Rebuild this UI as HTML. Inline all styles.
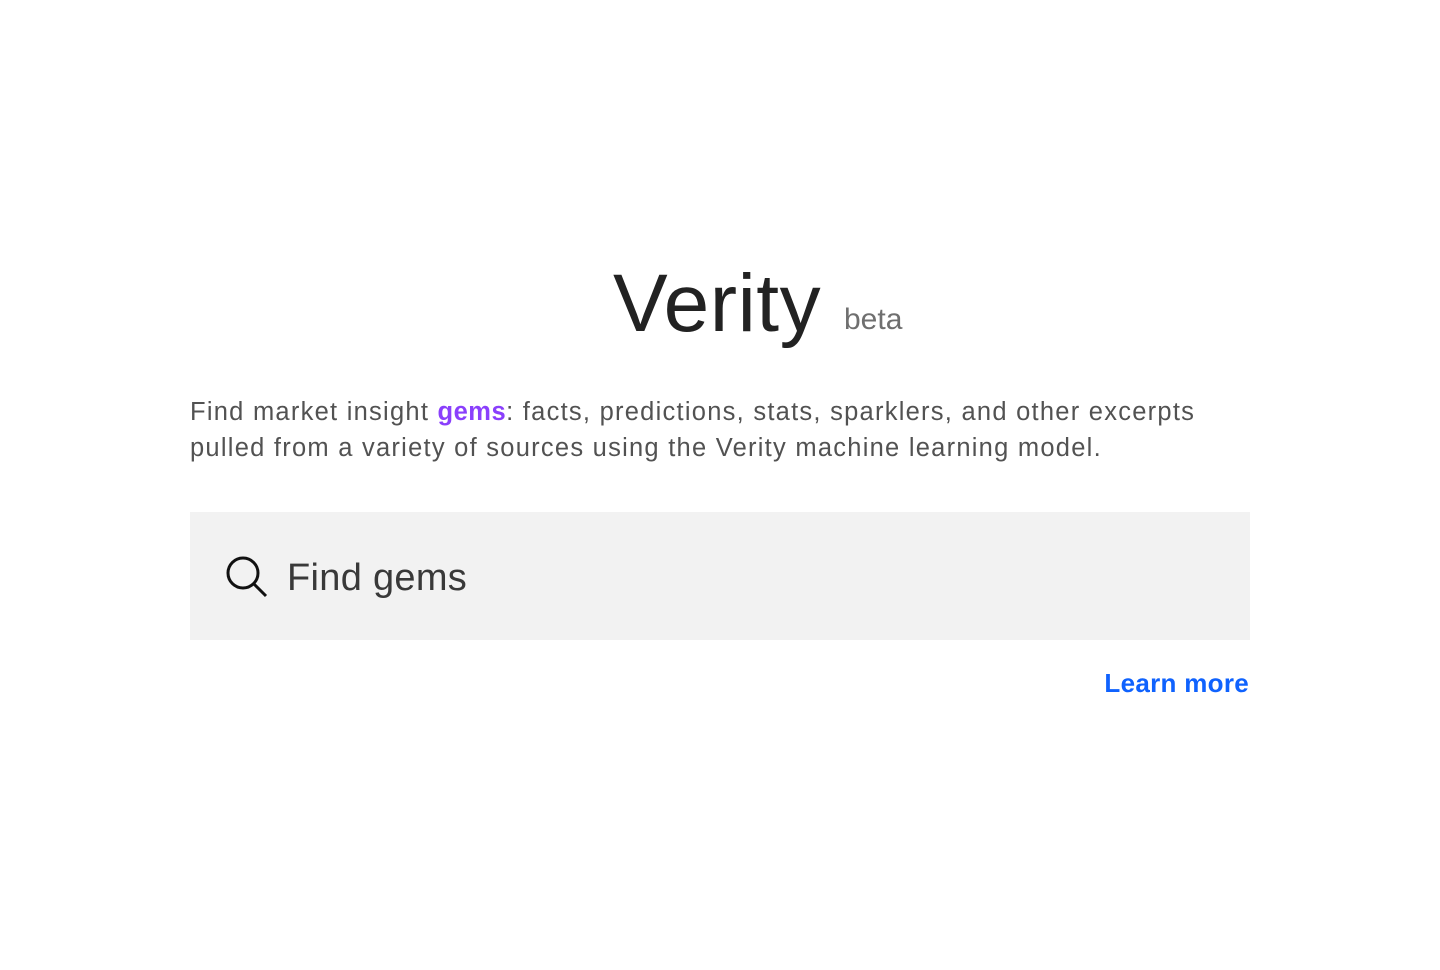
<!DOCTYPE html>
<html><head><style>
body{margin:0;background:#fff;font-family:"Liberation Sans",sans-serif;width:1440px;height:970px;position:relative;overflow:hidden}
.t{position:absolute;left:613px;top:263px;font-size:82px;color:#222;line-height:1;white-space:nowrap;letter-spacing:0.5px}
.b{position:absolute;left:844px;top:305px;font-size:30px;color:#6f6f6f;line-height:1}
.p{position:absolute;left:190px;top:394px;width:1060px;font-size:25.5px;line-height:36px;color:#525252;white-space:nowrap;letter-spacing:1.25px}
.p b{color:#8a3ffc;letter-spacing:0.5px}
.s{position:absolute;left:190px;top:512px;width:1060px;height:128px;background:#f2f2f2}
.f{position:absolute;left:287px;top:556px;font-size:38px;color:#393939;line-height:44px;letter-spacing:0.3px}
.l{position:absolute;right:191px;top:667px;font-size:26px;font-weight:bold;color:#0f62fe;line-height:32px;letter-spacing:0.3px}
</style></head><body>
<div class="t">Verity</div>
<div class="b">beta</div>
<div class="p">Find market insight <b>gems</b>: facts, predictions, stats, sparklers, and other excerpts<br>pulled from a variety of sources using the Verity machine learning model.</div>
<div class="s"></div>
<svg style="position:absolute;left:224px;top:554px" width="46" height="46" viewBox="0 0 46 46"><circle cx="19" cy="19" r="15" fill="none" stroke="#111" stroke-width="3"/><line x1="30" y1="30" x2="42" y2="42" stroke="#111" stroke-width="3"/></svg>
<div class="f">Find gems</div>
<div class="l">Learn more</div>
</body></html>
